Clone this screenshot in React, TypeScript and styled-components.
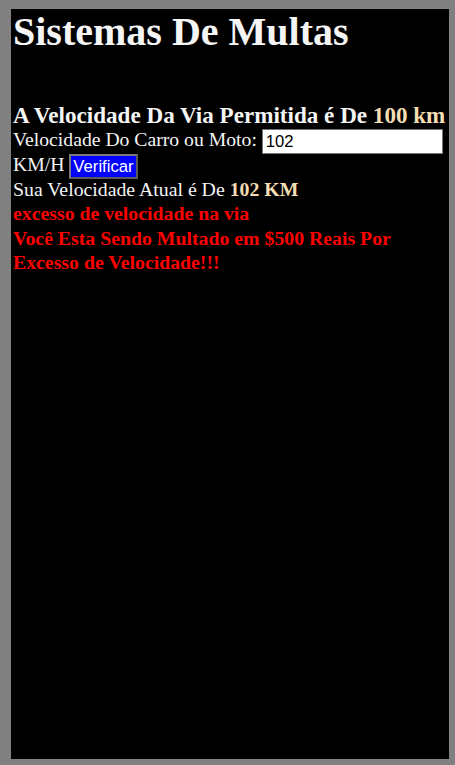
import React, { useState } from "react";
import styled, { createGlobalStyle } from "styled-components";

const Global = createGlobalStyle`
  html, body { margin: 0; padding: 0; }
  body {
    background: #808080;
    font-family: "Liberation Serif", "Times New Roman", serif;
    padding: 9px 6px 6px 11px;
  }
`;

const Panel = styled.div`
  background: #000;
  height: 750px;
  box-sizing: border-box;
  padding: 0 2px;
  color: #f5f5f5;
`;

const Title = styled.h1`
  margin: 0;
  font-size: 40px;
  font-weight: bold;
  line-height: 46px;
`;

const Limit = styled.h3`
  margin: 47px 0 0;
  font-size: 23.1px;
  line-height: 27px;
  font-weight: bold;
  white-space: nowrap;
`;

const Highlight = styled.span`
  color: #f5deb3;
  font-weight: bold;
`;

const Form = styled.div`
  font-size: 19.7px;
  line-height: 21px;
`;

const Input = styled.input`
  font-family: "Liberation Sans", Arial, sans-serif;
  font-size: 16.7px;
  width: 181px;
  height: 25px;
  box-sizing: border-box;
  border: 1px solid #767676;
  padding: 1px 3px;
  vertical-align: top;
  margin: 0;
  color: #000;
  background: #fff;
`;

const Button = styled.button`
  font-family: "Liberation Sans", Arial, sans-serif;
  font-size: 16.7px;
  background: #0000ff;
  color: #fff;
  border: 2px solid #7a7a7a;
  border-right-color: #5a5a5a;
  border-bottom-color: #5a5a5a;
  padding: 0 2px;
  height: 25px;
  margin: 0;
  vertical-align: top;
  line-height: 19px;
`;

const Result = styled.div`
  font-size: 19.8px;
  line-height: 20px;
`;

const Alerts = styled.div`
  margin-top: 2px;
  color: #ff0000;
  font-weight: bold;
  font-size: 19.8px;
  line-height: 24.5px;
`;

export default function App() {
  const [value, setValue] = useState("102");
  return (
    <>
      <Global />
      <Panel>
        <Title>Sistemas De Multas</Title>
        <Limit>
          A Velocidade Da Via Permitida é De <Highlight>100 km</Highlight>
        </Limit>
        <Form>
          Velocidade Do Carro ou Moto:{" "}
          <Input value={value} onChange={(e) => setValue(e.target.value)} /> KM/H{" "}
          <Button>Verificar</Button>
        </Form>
        <Result>
          Sua Velocidade Atual é De <Highlight>102 KM</Highlight>
        </Result>
        <Alerts>
          <div>excesso de velocidade na via</div>
          <div>Você Esta Sendo Multado em $500 Reais Por Excesso de Velocidade!!!</div>
        </Alerts>
      </Panel>
    </>
  );
}
